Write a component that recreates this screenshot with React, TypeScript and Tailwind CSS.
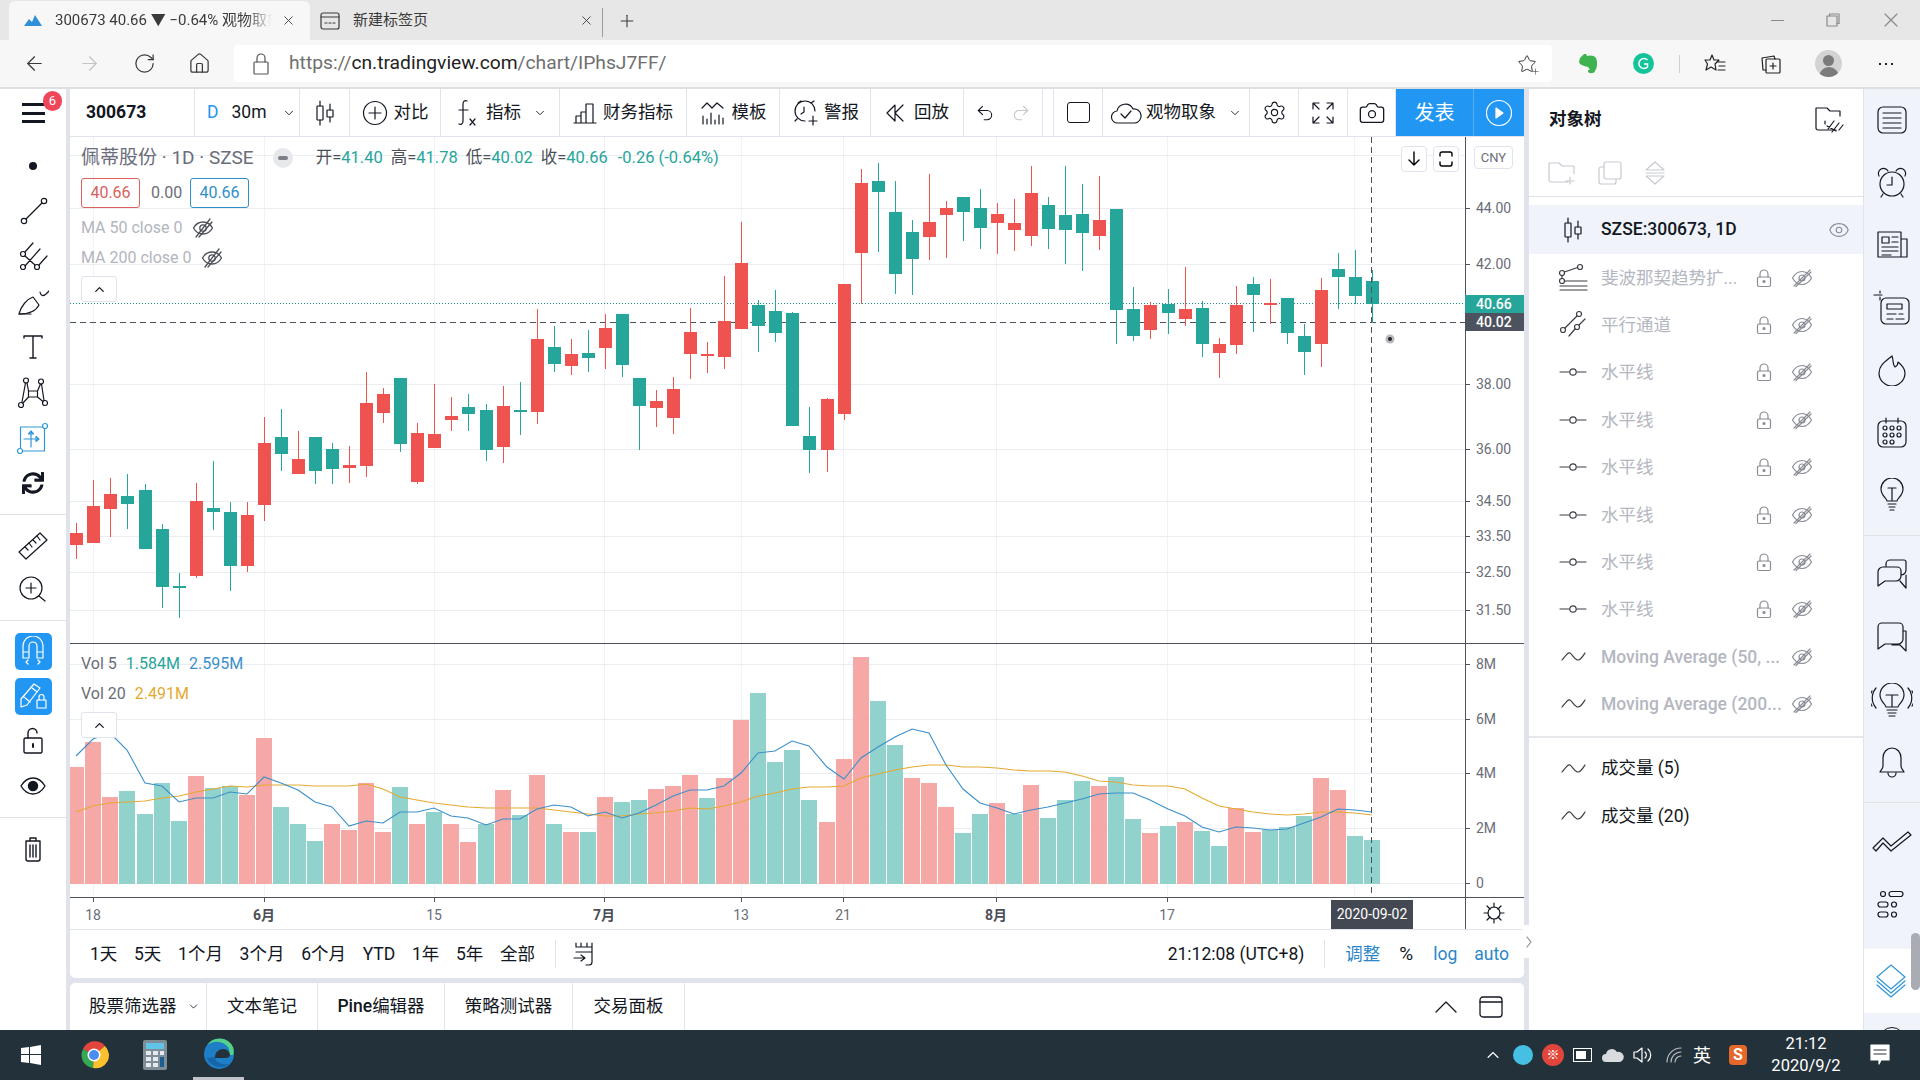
import { ChevronDown, ChevronUp, Camera, Settings, Undo2, Redo2, Star, Eye, X, Plus, ArrowLeft, ArrowRight, RotateCw, House } from 'lucide-react'
import { FaSync } from 'react-icons/fa'
import { ReactNode } from 'react'

// [wickTop, bodyTop, bodyBottom, wickBottom, color]
const candles: [number, number, number, number, string][] = [
  [523, 533, 545, 559, 'r'], [480, 506, 543, 543, 'r'], [478, 494, 509, 537, 'r'], [474, 496, 504, 529, 'g'],
  [484, 490, 549, 549, 'g'], [524, 529, 587, 608, 'g'], [573, 586, 588, 618, 'g'], [483, 501, 576, 578, 'r'],
  [461, 508, 512, 530, 'g'], [502, 512, 566, 591, 'g'], [502, 515, 566, 572, 'r'], [417, 443, 505, 521, 'r'],
  [409, 437, 454, 471, 'g'], [431, 459, 474, 474, 'r'], [437, 437, 471, 484, 'g'], [443, 449, 469, 484, 'g'],
  [446, 465, 468, 483, 'r'], [372, 403, 466, 477, 'r'], [388, 394, 413, 423, 'r'], [378, 378, 444, 452, 'g'],
  [423, 433, 482, 484, 'r'], [384, 434, 448, 448, 'r'], [397, 416, 420, 431, 'r'], [394, 407, 414, 431, 'g'],
  [404, 410, 450, 461, 'g'], [386, 406, 447, 463, 'r'], [382, 410, 412, 435, 'g'], [309, 339, 412, 424, 'r'],
  [326, 347, 364, 372, 'g'], [339, 354, 366, 375, 'r'], [330, 353, 358, 372, 'g'], [314, 328, 348, 369, 'r'],
  [314, 314, 365, 377, 'g'], [378, 378, 406, 450, 'g'], [390, 401, 408, 427, 'r'], [377, 389, 418, 434, 'r'],
  [308, 332, 354, 379, 'r'], [342, 354, 356, 373, 'r'], [276, 321, 357, 369, 'r'], [222, 263, 329, 329, 'r'],
  [300, 305, 326, 352, 'g'], [290, 311, 333, 342, 'g'], [312, 313, 426, 426, 'g'], [407, 436, 450, 473, 'g'],
  [398, 399, 450, 472, 'r'], [284, 284, 414, 420, 'r'], [169, 183, 253, 304, 'r'], [163, 181, 192, 252, 'g'],
  [181, 212, 274, 294, 'g'], [220, 232, 259, 295, 'g'], [174, 222, 237, 260, 'r'], [201, 208, 215, 258, 'r'],
  [197, 197, 212, 241, 'g'], [189, 208, 228, 249, 'g'], [203, 214, 223, 254, 'r'], [199, 223, 230, 251, 'r'],
  [166, 193, 236, 246, 'r'], [197, 205, 229, 249, 'g'], [166, 215, 230, 264, 'g'], [184, 214, 233, 271, 'g'],
  [176, 220, 236, 250, 'r'], [209, 209, 310, 344, 'g'], [287, 309, 336, 341, 'g'], [302, 305, 330, 339, 'r'],
  [289, 304, 313, 334, 'g'], [267, 309, 319, 326, 'r'], [301, 308, 344, 357, 'g'], [338, 344, 353, 378, 'r'],
  [286, 305, 345, 354, 'r'], [277, 284, 295, 332, 'g'], [279, 303, 305, 324, 'r'], [298, 298, 333, 344, 'g'],
  [324, 336, 352, 375, 'g'], [278, 290, 344, 367, 'r'], [253, 269, 277, 309, 'g'], [250, 277, 296, 304, 'g'],
  [270, 281, 304, 323, 'g'],
]

const volTops = [
  767, 742, 797, 791, 814, 783, 821, 776, 788, 786, 795, 738, 807, 824, 841, 824, 830, 783, 832, 787, 824, 812, 824, 842, 824, 790,
  815, 775, 824, 832, 832, 797, 802, 800, 789, 786, 775, 798, 778, 720, 693, 762, 750, 800, 822, 759, 657, 701, 745, 778, 783, 807,
  833, 814, 803, 814, 785, 818, 800, 781, 786, 777, 819, 833, 826, 822, 831, 846, 808, 832, 830, 827, 816, 778, 790, 836, 840,
]
const volColors = 'rrrggggrggrrgggrrrrgrgrrgrgrgrgrggrrrgrrggggrrrggrrrggrgrgggrggrgrggrrgggrrgg'

const ma5 = [
  756, 739, 733, 750, 783, 786, 802, 798, 798, 792, 794, 777, 783, 790, 802, 807, 826, 821, 823, 812, 812, 808, 816, 818, 825, 819,
  819, 809, 805, 807, 816, 812, 818, 813, 805, 796, 790, 790, 786, 773, 753, 751, 741, 746, 767, 779, 758, 747, 737, 729, 733, 765,
  789, 803, 808, 814, 810, 807, 803, 799, 794, 793, 793, 800, 809, 816, 827, 832, 827, 828, 830, 829, 823, 817, 809, 810, 812,
]
const ma20 = [
  812, 806, 803, 802, 801, 798, 796, 792, 789, 786, 787, 785, 785, 785, 786, 786, 786, 784, 789, 797, 800, 803, 805, 807, 808, 808,
  808, 808, 810, 812, 814, 816, 816, 814, 813, 811, 808, 809, 806, 802, 796, 793, 789, 787, 787, 786, 778, 774, 770, 767, 765, 765,
  767, 767, 768, 770, 771, 771, 772, 776, 781, 782, 785, 786, 786, 789, 798, 806, 809, 812, 814, 815, 814, 812, 812, 813, 815,
]

const barX = (i: number) => Math.round(76.3 + 17.05 * i)
const pts = (ys: number[]) => ys.map((y, i) => `${barX(i)},${y}`).join(' ')

const priceLabels: [string, number][] = [['44.00', 208], ['42.00', 264], ['38.00', 384], ['36.00', 449], ['34.50', 501], ['33.50', 536], ['32.50', 572], ['31.50', 610]]
const volLabels: [string, number][] = [['8M', 664], ['6M', 719], ['4M', 773], ['2M', 828], ['0', 883]]
const timeLabels: [string, number, boolean][] = [['18', 93, false], ['6月', 264, true], ['15', 434, false], ['7月', 604, true], ['13', 741, false], ['21', 843, false], ['8月', 996, true], ['17', 1167, false]]

const S = ({ w = 28, h = 28, sw = 1.2, className = '', children }: { w?: number; h?: number; sw?: number; className?: string; children: ReactNode }) => (
  <svg width={w} height={h} viewBox={`0 0 ${w} ${h}`} fill="none" stroke="currentColor" strokeWidth={sw} strokeLinecap="round" strokeLinejoin="round" className={`shrink-0 ${className}`}>
    {children}
  </svg>
)

const CandleIcon = () => (
  <S w={22} h={26}>
    <path d="M6 1v5M6 20v5M16 4v6M16 17v5" />
    <rect x="3" y="6" width="6" height="14" rx="0.5" />
    <rect x="13" y="10" width="6" height="7" rx="0.5" />
  </S>
)
const HLineIcon = () => (
  <S w={28} h={14}>
    <path d="M1 7h9M18 7h9" /><circle cx="14" cy="7" r="3.2" />
  </S>
)
const WaveIcon = () => (
  <S w={28} h={14}>
    <path d="M3 10C7 5 9 2 11 3s5 7 8 7 5-4 7-7" />
  </S>
)
const FibIcon = () => (
  <S w={32} h={32}>
    <circle cx="5" cy="11" r="2.5" /><circle cx="5" cy="19" r="2.5" /><circle cx="23" cy="5" r="2.5" />
    <path d="M7.5 10l13-4.5M5 13.5v3M8 19h22M3 24h27M3 28h27" />
  </S>
)
const ChannelIcon = () => (
  <S w={30} h={30}>
    <circle cx="5" cy="20" r="2.5" /><circle cx="19" cy="17" r="2.5" /><circle cx="21" cy="4" r="2.5" />
    <path d="M7 18L19 6M11 26l6-7M21 15l6-6" />
  </S>
)
const EyeOffGray = () => (
  <S w={22} h={20} className="text-[#8a8d96]">
    <path d="M1.5 10C4 5.5 7.5 3.5 11 3.5s7 2 9.5 6.5c-2.5 4.5-6 6.5-9.5 6.5S4 14.5 1.5 10z" />
    <circle cx="11" cy="10" r="3" /><path d="M3 18L19 2M5 18.5L20 4" />
  </S>
)
const LockGray = () => (
  <S w={16} h={20} className="text-[#8a8d96]">
    <path d="M4 9V6a4 4 0 018 0v3" /><rect x="1.5" y="9" width="13" height="9.5" rx="1.5" />
    <circle cx="8" cy="13.5" r="1" fill="currentColor" />
  </S>
)

const tree: { name: string; icon: ReactNode; lock: boolean; bold?: boolean }[] = [
  { name: '斐波那契趋势扩...', icon: <FibIcon />, lock: true },
  { name: '平行通道', icon: <ChannelIcon />, lock: true },
  { name: '水平线', icon: <HLineIcon />, lock: true },
  { name: '水平线', icon: <HLineIcon />, lock: true },
  { name: '水平线', icon: <HLineIcon />, lock: true },
  { name: '水平线', icon: <HLineIcon />, lock: true },
  { name: '水平线', icon: <HLineIcon />, lock: true },
  { name: '水平线', icon: <HLineIcon />, lock: true },
  { name: 'Moving Average (50, ...', icon: <WaveIcon />, lock: false, bold: true },
  { name: 'Moving Average (200...', icon: <WaveIcon />, lock: false, bold: true },
]

const TreeRow = ({ name, icon, lock, bold }: { name: string; icon: ReactNode; lock: boolean; bold?: boolean }) => (
  <div className="flex h-[47.4px] items-center">
    <div className="flex w-[72px] justify-end pr-[12px]"><div className="flex w-[32px] justify-center">{icon}</div></div>
    <div className={`w-[150px] text-[17.5px] whitespace-nowrap text-[#b4b7bf] ${bold ? 'font-medium' : ''}`}>{name}</div>
    <div className="ml-[13px] flex w-[0px] justify-center">{lock && <LockGray />}</div>
    <div className="ml-[26px] flex w-[24px] justify-center"><EyeOffGray /></div>
  </div>
)

const rightIcons: ReactNode[] = [
  <S w={32} h={30}><rect x="2" y="2" width="28" height="26" rx="5" /><path d="M7 8h18M7 13h18M7 18h18M7 23h18" /></S>,
  <S w={32} h={32}><circle cx="16" cy="17" r="12" /><path d="M16 10v8h-5M3 9a5 5 0 019-5M29 9a5 5 0 00-9-5M7 27l-2 3M25 27l2 3" /></S>,
  <S w={34} h={30}><path d="M26 27H3V2h23v25M26 9h6v18h-6" /><rect x="7" y="7" width="7" height="6" /><path d="M17 7h6M17 12h6M7 17h16M7 21h16M7 25h9" /></S>,
  <S w={38} h={36}><path d="M1 5h8M7 1v2M7 7v3" /><rect x="8" y="8" width="28" height="26" rx="5" /><path d="M14 14h15v5H14zM14 24h9M26 24h4M14 29h6M23 29h8" /></S>,
  <S w={30} h={32}><path d="M15 2c2 5 0 8 3 11 2-1 3-3 3-5 5 4 7 8 7 11a13 13 0 01-26 0C2 11 9 7 15 2z" /></S>,
  <S w={32} h={32}><rect x="2" y="4" width="28" height="26" rx="5" /><path d="M10 1v5M22 1v5" /><circle cx="9" cy="11" r="2" /><circle cx="16" cy="11" r="2" /><circle cx="23" cy="11" r="2" /><circle cx="9" cy="18" r="2" /><circle cx="16" cy="18" r="2" /><circle cx="23" cy="18" r="2" /><circle cx="9" cy="25" r="2" /><circle cx="16" cy="25" r="2" /></S>,
  <S w={26} h={34}><path d="M8 23c0-3-6-5-6-12a11 11 0 0122 0c0 7-6 9-6 12zM9 26h8M10 29h6M11 32h4M9 10h8M13 10v12" /></S>,
]
const rightIcons2: ReactNode[] = [
  <S w={32} h={34}><path d="M2 28V14a5 5 0 015-5h14a4 4 0 014 4v5a5 5 0 01-5 5H9l-7 5zM10 8V6a4 4 0 014-4h14a2 2 0 012 2v8a5 5 0 01-5 5M24 23l6 7V17" /></S>,
  <S w={32} h={32}><path d="M2 28V6a4 4 0 014-4h17a4 4 0 014 4v12a5 5 0 01-5 5H9l-7 5zM27 10h3v20l-6-6-8 0" /></S>,
  <S w={42} h={34}><path d="M15 24c0-3-6-5-6-12a12 12 0 0124 0c0 7-6 9-6 12zM16 27h10M17 30h8M18 33h6M15 12h12M21 12v12M5 5c-5 6-5 14 0 20M1 8c-3 5-3 10 0 15M37 5c5 6 5 14 0 20M41 8c3 5 3 10 0 15" /></S>,
  <S w={28} h={32}><path d="M14 2c5 0 9 4 9 10v8c0 3 2 4 3 6H2c1-2 3-3 3-6v-8c0-6 4-10 9-10zM10 27a4 4 0 008 0" /></S>,
]

const Divider = () => <div className="h-[1px] w-full shrink-0 bg-[#dfe3e8]" />

const ToolRow = ({ children }: { children: ReactNode }) => <div className="flex h-[45.4px] w-full items-center justify-center">{children}</div>

const LeftToolbar = () => (
  <aside className="flex w-[66px] shrink-0 flex-col bg-white text-[#131722]">
    <div className="relative flex h-[48px] items-center justify-center">
      <div className="flex w-[23px] flex-col gap-[5.5px]">
        <div className="h-[3px] bg-[#131722]" /><div className="h-[3px] bg-[#131722]" /><div className="h-[3px] bg-[#131722]" />
      </div>
      <div className="absolute top-[2px] left-[43px] flex h-[20px] w-[19px] items-center justify-center rounded-full bg-[#f0465a] text-[13px] text-white">6</div>
    </div>
    <div className="flex flex-col pt-[6px]">
      <ToolRow><div className="h-[8px] w-[8px] rounded-full bg-[#131722]" /></ToolRow>
      <ToolRow><S w={30} h={30}><circle cx="6" cy="25" r="2.7" /><circle cx="26" cy="5" r="2.7" /><path d="M8 23L24 7" /></S></ToolRow>
      <ToolRow><S w={30} h={30}><circle cx="5" cy="13" r="2.5" /><circle cx="5" cy="26" r="2.5" /><circle cx="19" cy="26" r="2.5" /><path d="M7 11l8-9M7 25L22 8M21 24l8-9M7 15l10 9" /></S></ToolRow>
      <ToolRow><S w={32} h={28}><path d="M2 26C4 18 10 11 16 9l6 8c-3 6-9 9-20 9z" /><path d="M2 26h12M23 4c1 5 4 5 9-1" /></S></ToolRow>
      <ToolRow><S w={24} h={28} sw={1.4}><path d="M3 5V3h18v2M12 3v22M9 25h6" /></S></ToolRow>
      <ToolRow><S w={30} h={32}><circle cx="8" cy="3.5" r="2.5" /><circle cx="23" cy="4.5" r="2.5" /><circle cx="3" cy="28" r="2.5" /><circle cx="27" cy="26" r="2.5" /><path d="M4 25L7.5 6M26 23.5L23.5 7M10.5 14h9v6h-9zM5 26l5.5-6M25 24.5L19.5 20M10.5 14L9 6M19.5 14l3-7" /></S></ToolRow>
      <ToolRow><S w={32} h={32} className="text-[#2f97d6]"><rect x="3.5" y="5" width="24" height="24" /><circle cx="28" cy="4" r="2.5" fill="white" /><circle cx="3" cy="29" r="2.5" fill="white" /><path d="M14 9v16M7 17h15M14 9l-2.5 3h5zM22 17l-3-2.5v5z" /></S></ToolRow>
      <ToolRow><FaSync size={22} className="text-[#131722]" /></ToolRow>
    </div>
    <div className="mt-[8px]"><Divider /></div>
    <div className="flex flex-col pt-[7px]">
      <ToolRow><S w={32} h={32}><path d="M2 23L23 4l7 7L9 30z" /><path d="M8 18l3 3M12 14l3 4M16 11l3 3M20 7l3 4" /></S></ToolRow>
      <ToolRow><S w={30} h={30}><circle cx="13" cy="13" r="11" /><path d="M13 8v10M8 13h10M21 21l6 5" /></S></ToolRow>
    </div>
    <div className="mt-[7px]"><Divider /></div>
    <div className="flex flex-col items-center gap-[8px] pt-[12px]">
      <div className="flex h-[37px] w-[37px] items-center justify-center rounded-[5px] bg-[#2196f3] text-white">
        <S w={24} h={30}><path d="M2 22V10a10 10 0 0120 0v12h-6V10a4 4 0 00-8 0v12zM2 16h6M16 16h6M7 24l-2 2 2 2M17 24l2 2-2 2" /></S>
      </div>
      <div className="flex h-[37px] w-[37px] items-center justify-center rounded-[5px] bg-[#2196f3] text-white">
        <S w={30} h={30}><path d="M3 18L16 3l6 4L9 24l-6 2zM6 16l6 5M13 6l6 5" /><rect x="19" y="19" width="9" height="8" /><path d="M21 19v-3a2.5 2.5 0 015 0v3" /></S>
      </div>
    </div>
    <div className="flex flex-col pt-[3px]">
      <ToolRow><S w={22} h={28} sw={1.4}><rect x="2" y="11" width="18" height="15" rx="1.5" /><path d="M6 11V6a4.5 4.5 0 019 0" /><path d="M11 17v3" strokeWidth="2" /></S></ToolRow>
      <ToolRow><S w={28} h={22} sw={1.4}><path d="M2 11c3-5 7-8 12-8s9 3 12 8c-3 5-7 8-12 8S5 16 2 11z" /><circle cx="14" cy="11" r="4.5" fill="currentColor" /></S></ToolRow>
    </div>
    <div className="mt-[8px]"><Divider /></div>
    <div className="flex justify-center pt-[18px]">
      <S w={20} h={26} sw={1.4}><path d="M3 5h14M7 5V2h6v3M3 5v18a2 2 0 002 2h10a2 2 0 002-2V5M7 9v12M10 9v12M13 9v12" /></S>
    </div>
  </aside>
)

const Cell = ({ className, children }: { className: string; children: ReactNode }) => (
  <div className={`flex h-full shrink-0 items-center justify-center border-r border-[#e0e3eb] ${className}`}>{children}</div>
)

const TopToolbar = () => (
  <div className="flex h-[48px] shrink-0 border-b border-[#e0e3eb] bg-white text-[17.5px] text-[#131722]">
    <Cell className="w-[125px] justify-start pl-[16px] font-bold">300673</Cell>
    <Cell className="w-[105px] justify-start pl-[12px]"><span className="text-[#2196f3]">D</span><span className="ml-[13px]">30m</span><ChevronDown size={14} strokeWidth={1.5} className="ml-[15px]" /></Cell>
    <Cell className="w-[50px]"><CandleIcon /></Cell>
    <Cell className="w-[91px] gap-[6px]"><S w={26} h={26}><circle cx="13" cy="13" r="11.5" /><path d="M13 7v12M7 13h12" /></S><span>对比</span></Cell>
    <Cell className="w-[119px] justify-start pl-[15px]">
      <S w={24} h={28}><path d="M11 2c-2-1-4 0-4 3v17c0 3-2 4-4 3M3 11h9M14 20l5 6M19 20l-5 6" /></S>
      <span className="ml-[6px]">指标</span><ChevronDown size={14} strokeWidth={1.5} className="ml-[12px]" />
    </Cell>
    <Cell className="w-[127px] gap-[6px]"><S w={24} h={22}><path d="M1 21h22M3 21v-7h5v7M8 21V10h5v11M13 21V2h7v19" /></S><span>财务指标</span></Cell>
    <Cell className="w-[93px] gap-[6px]"><S w={26} h={24}><path d="M2 7l5-5 5 5 5-5 6 5M3 23v-8M7 23v-5M11 23V12M15 23v-4M19 23v-9M23 23v-6" /></S><span>模板</span></Cell>
    <Cell className="w-[91px] gap-[5px]"><S w={28} h={28}><path d="M14 22a10 10 0 1 1 10-10M7 4l3-2M20 4l3-2M4 22l2-2M13 8v5l-3 2M22 17v9M18 22h8" /></S><span>警报</span></Cell>
    <Cell className="w-[93px] gap-[9px]"><S w={20} h={22}><path d="M10 3l-8 8 8 8zM18 3l-8 8 8 8" /></S><span>回放</span></Cell>
    <Cell className="w-[79px] gap-[16px]"><Undo2 size={20} strokeWidth={1.3} /><Redo2 size={20} strokeWidth={1.3} className="text-[#c4c6cc]" /></Cell>
    <Cell className="w-[11px]"><span /></Cell>
    <Cell className="w-[49px]"><div className="h-[21px] w-[23px] rounded-[3px] border-[1.5px] border-[#131722]" /></Cell>
    <Cell className="w-[147px] gap-[4px]">
      <S w={32} h={24}><path d="M8 22a6 6 0 01-1-12 8.5 8.5 0 0116-2 7 7 0 012 14z" /><path d="M11 13l4 4 6-7" /></S>
      <span>观物取象</span><ChevronDown size={14} strokeWidth={1.5} className="ml-[8px]" />
    </Cell>
    <Cell className="w-[49px]"><Settings size={25} strokeWidth={1.1} /></Cell>
    <Cell className="w-[49px]"><S w={24} h={24}><path d="M2 8V2h6M16 2h6v6M2 16v6h6M22 16v6h-6M3 3l5 5M21 3l-5 5M3 21l5-5M21 21l-5-5" /></S></Cell>
    <Cell className="w-[48px]"><Camera size={28} strokeWidth={1.1} /></Cell>
    <div className="flex h-full w-[78px] items-center justify-center border-r border-[#55adf5] bg-[#2196f3] text-[20px] text-white">发表</div>
    <div className="flex h-full w-[50px] items-center justify-center bg-[#2196f3] text-white">
      <S w={28} h={28}><circle cx="14" cy="14" r="12.5" /><path d="M11 9l7 5-7 5z" fill="currentColor" /></S>
    </div>
  </div>
)

const EyeOffLegend = () => (
  <S w={22} h={20} sw={1.3}>
    <path d="M1.5 10C4 5.5 7.5 4 11 4s7 1.5 9.5 6c-2.5 4.5-6 6-9.5 6S4 14.5 1.5 10z" />
    <circle cx="11" cy="10" r="3.2" /><path d="M4 19L18 1M7 19L20 4" />
  </S>
)

const Collapse = ({ className }: { className: string }) => (
  <div className={`flex h-[26px] w-[36px] items-center justify-center rounded-[3px] border border-[#e0e3eb] bg-white ${className}`}>
    <ChevronUp size={15} strokeWidth={2} className="text-[#131722]" />
  </div>
)

const Chart = () => (
  <div className="relative h-[792px] shrink-0 overflow-hidden bg-white">
    <svg width={1454} height={792} viewBox="70 137 1454 792" className="block">
      {[93, 264, 434, 604, 741, 843, 996, 1167, 1354].map(x => (
        <line key={x} x1={x + 0.5} x2={x + 0.5} y1={137} y2={897} stroke="#f0f3f6" />
      ))}
      {[155, 208, 264, 384, 449, 501, 536, 572, 610].map(y => <line key={y} x1={70} x2={1465} y1={y + 0.5} y2={y + 0.5} stroke="#ebeef1" />)}
      {[664, 719, 773, 828, 883].map(y => <line key={y} x1={70} x2={1465} y1={y + 0.5} y2={y + 0.5} stroke="#ebeef1" />)}

      <line x1={70} x2={1465} y1={303.5} y2={303.5} stroke="#1f8f85" strokeDasharray="1 2" />
      <line x1={70} x2={1465} y1={322.5} y2={322.5} stroke="#4c525e" strokeDasharray="6 4" />

      {candles.map(([wt, bt, bb, wb, c], i) => {
        const color = c === 'r' ? '#ef5350' : '#26a69a'
        const x = barX(i)
        return (
          <g key={i}>
            <line x1={x + 0.5} x2={x + 0.5} y1={wt} y2={wb} stroke={color} />
            <rect x={x - 6} y={bt} width={13} height={bb - bt} fill={color} />
          </g>
        )
      })}

      {volTops.map((t, i) => (
        <rect key={i} x={barX(i) - 8} y={t} width={16} height={884 - t} fill={volColors[i] === 'r' ? '#f6a8a6' : '#92d2cc'} />
      ))}
      <polyline points={pts(ma20)} fill="none" stroke="#e4a930" strokeWidth={1.1} />
      <polyline points={pts(ma5)} fill="none" stroke="#3b8fcb" strokeWidth={1.1} />

      <line x1={70} x2={1524} y1={643.5} y2={643.5} stroke="#50535e" />
      <line x1={70} x2={1524} y1={897.5} y2={897.5} stroke="#50535e" />
      <line x1={1465.5} x2={1465.5} y1={137} y2={929} stroke="#50535e" />
      <line x1={1371.5} x2={1371.5} y1={137} y2={897} stroke="#4c525e" strokeDasharray="6 4" />

      {priceLabels.map(([t, y]) => <g key={t}><line x1={1465} x2={1470} y1={y + 0.5} y2={y + 0.5} stroke="#50535e" /><text x={1476} y={y + 5} fontSize={14} fill="#6a6d78">{t}</text></g>)}
      {volLabels.map(([t, y]) => <g key={t}><line x1={1465} x2={1470} y1={y + 0.5} y2={y + 0.5} stroke="#50535e" /><text x={1476} y={y + 5} fontSize={14} fill="#6a6d78">{t}</text></g>)}
      {timeLabels.map(([t, x, b]) => <g key={t}><line x1={x + 0.5} x2={x + 0.5} y1={897} y2={902} stroke="#50535e" /><text x={x} y={920} fontSize={14} textAnchor="middle" fontWeight={b ? 700 : 400} fill={b ? '#4c4f58' : '#6a6d78'}>{t}</text></g>)}

      <circle cx={1390} cy={339} r={4.5} fill="#b6b8bd" /><circle cx={1390} cy={339} r={2} fill="#222" />
    </svg>

    <div className="absolute top-[158px] right-[0px] flex h-[18px] w-[59px] items-center bg-[#26a69a] pl-[11px] text-[14px] font-medium text-white">40.66</div>
    <div className="absolute top-[176px] right-[0px] flex h-[18px] w-[59px] items-center bg-[#4c525e] pl-[11px] text-[14px] font-medium text-white">40.02</div>
    <div className="absolute top-[763px] left-[1261px] flex h-[29px] w-[82px] items-center justify-center bg-[#434852] text-[14px] text-white">2020-09-02</div>
    <div className="absolute top-[764px] left-[1412px] text-[#131722]"><S w={24} h={24}><circle cx="12" cy="12" r="6" /><path d="M12 2v4M12 18v4M2 12h4M18 12h4M5 5l3 3M16 16l3 3M5 19l3-3M16 8l3-3" /></S></div>

    <div className="absolute top-[9px] left-[1331px] flex gap-[6px]">
      <div className="flex h-[26px] w-[26px] items-center justify-center rounded-[4px] border border-[#e0e3eb] bg-white"><S w={14} h={16} sw={1.4}><path d="M7 1v13M2 9l5 5 5-5" /></S></div>
      <div className="flex h-[26px] w-[26px] items-center justify-center rounded-[4px] border border-[#e0e3eb] bg-white"><S w={16} h={16} sw={1.4}><path d="M2 5V3a2 2 0 012-2h8a2 2 0 012 2v2M2 11v2a2 2 0 002 2h8a2 2 0 002-2v-2" /></S></div>
    </div>
    <div className="absolute top-[9px] left-[1404px] flex h-[23px] w-[39px] items-center justify-center rounded-[4px] border border-[#e0e3eb] bg-white text-[13px] text-[#6a6d78]">CNY</div>

    <div className="absolute top-[9px] left-[11px] flex flex-col items-start">
      <div className="flex h-[24px] items-center">
        <span className="text-[19px] text-[#6a6d78]">佩蒂股份 · 1D · SZSE</span>
        <div className="ml-[19px] flex h-[20px] w-[20px] items-center justify-center rounded-full bg-[#e6e8ec]"><div className="h-[4px] w-[10px] rounded-full bg-[#7c7f88]" /></div>
        <span className="ml-[23px] flex gap-[8px] text-[16.5px] text-[#4c4f58]">
          <span>开=<span className="text-[#26a69a]">41.40</span></span>
          <span>高=<span className="text-[#26a69a]">41.78</span></span>
          <span>低=<span className="text-[#26a69a]">40.02</span></span>
          <span>收=<span className="text-[#26a69a]">40.66</span></span>
          <span className="ml-[2px] text-[#26a69a]">-0.26 (-0.64%)</span>
        </span>
      </div>
      <div className="mt-[8px] flex h-[30px] items-center text-[16px]">
        <div className="flex h-[30px] w-[59px] items-center justify-center rounded-[3px] border border-[#d9605c] text-[#d9605c]">40.66</div>
        <span className="ml-[11px] w-[39px] text-[#6a6d78]">0.00</span>
        <div className="flex h-[30px] w-[59px] items-center justify-center rounded-[3px] border border-[#2f8fc9] text-[#2f8fc9]">40.66</div>
      </div>
      <div className="mt-[5px] flex h-[30px] items-center gap-[9px] text-[16px] text-[#b2b5be]">
        <span>MA 50 close 0</span>
        <span className="text-[#4c4f58]"><EyeOffLegend /></span>
      </div>
      <div className="flex h-[30px] items-center gap-[9px] text-[16px] text-[#b2b5be]">
        <span>MA 200 close 0</span>
        <span className="text-[#4c4f58]"><EyeOffLegend /></span>
      </div>
      <Collapse className="mt-[3px]" />
    </div>

    <div className="absolute top-[512px] left-[11px] flex flex-col items-start text-[16px]">
      <div className="flex h-[30px] items-center gap-[9px] text-[#6a6d78]">
        <span>Vol 5</span><span className="text-[#26a69a]">1.584M</span><span className="text-[#3b8fcb]">2.595M</span>
      </div>
      <div className="flex h-[30px] items-center gap-[9px] text-[#6a6d78]">
        <span>Vol 20</span><span className="text-[#e4a930]">2.491M</span>
      </div>
      <Collapse className="mt-[3px]" />
    </div>
  </div>
)

const RangeBar = () => (
  <div className="flex h-[49px] shrink-0 items-center justify-between rounded-b-[5px] border-t border-[#e0e3eb] bg-white text-[17.5px] text-[#131722]">
    <div className="flex items-center pl-[20px]">
      <div className="flex items-center gap-[16.7px]">
        {['1天', '5天', '1个月', '3个月', '6个月', 'YTD', '1年', '5年', '全部'].map(t => <span key={t}>{t}</span>)}
      </div>
      <div className="ml-[20px] mr-[15px] h-[28px] w-[1px] bg-[#e0e3eb]" />
      <S w={24} h={26}><path d="M5 6h16v15a3 3 0 01-3 3h-3M5 6V2M10 6V2M16 6V2M21 6V2M5 11h16M3 17h11M10 14l4 3-4 3" /></S>
    </div>
    <div className="flex items-center pr-[15px]">
      <span>21:12:08 (UTC+8)</span>
      <div className="mx-[20px] h-[28px] w-[1px] bg-[#e0e3eb]" />
      <span className="text-[#2a86c9]">调整</span>
      <span className="ml-[19px] text-[19px]">%</span>
      <span className="ml-[20px] text-[#2a86c9]">log</span>
      <span className="ml-[17px] text-[#2a86c9]">auto</span>
    </div>
  </div>
)

const BottomTabs = () => (
  <div className="mt-[5px] flex h-[47px] shrink-0 items-center justify-between rounded-t-[5px] bg-white text-[17.5px] text-[#131722]">
    <div className="flex h-full">
      <Cell className="w-[137px] justify-start pl-[19px]"><span>股票筛选器</span><ChevronDown size={13} strokeWidth={1.5} className="ml-[10px]" /></Cell>
      <Cell className="w-[111px]">文本笔记</Cell>
      <Cell className="w-[127px]"><span><span className="font-medium">Pine</span>编辑器</span></Cell>
      <Cell className="w-[128px]">策略测试器</Cell>
      <Cell className="w-[112px]">交易面板</Cell>
    </div>
    <div className="flex items-center gap-[21px] pr-[21px]">
      <S w={24} h={14} sw={1.3}><path d="M2 12L12 2l10 10" /></S>
      <S w={24} h={22} sw={1.3}><rect x="1" y="1" width="22" height="20" rx="3" /><path d="M1 6h22" /></S>
    </div>
  </div>
)

const ObjectTree = () => (
  <section className="flex w-[334px] shrink-0 flex-col bg-white">
    <div className="flex h-[108px] flex-col border-b border-[#e0e3eb]">
      <div className="flex h-[60px] items-center justify-between pt-[1px] pr-[19px] pl-[20px]">
        <span className="text-[17.5px] font-bold text-[#131722]">对象树</span>
        <S w={30} h={30} className="text-[#131722]"><path d="M22 25H4a2 2 0 01-2-2V3h11l3 3h10v5M11 16v3" /><path d="M14 24l6-8M18 27l7-9M25 25l4-5M13 21l9 5" /></S>
      </div>
      <div className="flex h-[47px] items-center gap-[22px] pl-[19px] text-[#c8cad1]">
        <S w={28} h={24}><path d="M20 21H3a2 2 0 01-2-2V2h10l3 3h12v8M22 16v7M18 20h8" /></S>
        <S w={24} h={24}><rect x="6" y="1" width="17" height="17" rx="2" /><path d="M6 6H3a2 2 0 00-2 2v13a2 2 0 002 2h13a2 2 0 002-2v-3" /></S>
        <S w={22} h={26}><path d="M2 10l9-8 9 8zM2 16l9 8 9-8zM2 13h18" /></S>
      </div>
    </div>
    <div className="mt-[8px] flex h-[49px] items-center bg-[#f0f3fa]">
      <div className="flex w-[72px] justify-end pr-[12px]"><div className="flex w-[32px] justify-center text-[#131722]"><CandleIcon /></div></div>
      <div className="w-[227px] text-[17.5px] font-medium text-[#131722]">SZSE:300673, 1D</div>
      <Eye size={22} strokeWidth={1.2} className="text-[#8a8d96]" />
    </div>
    <div className="text-[#3a3d45]">
      {tree.map((r, i) => <TreeRow key={i} {...r} />)}
    </div>
    <div className="mt-[8px] border-t-2 border-[#e6e8ec] pt-[7px] text-[#3a3d45]">
      {['成交量 (5)', '成交量 (20)'].map(t => (
        <div key={t} className="flex h-[47.4px] items-center">
          <div className="flex w-[72px] justify-end pr-[12px]"><div className="flex w-[32px] justify-center"><WaveIcon /></div></div>
          <div className="text-[17.5px] text-[#131722]">{t}</div>
        </div>
      ))}
    </div>
  </section>
)

const RightBar = () => (
  <aside className="relative flex w-[57px] shrink-0 flex-col overflow-hidden border-l border-[#e0e3eb] bg-[#f0f3fa] text-[#131722]">
    <div className="flex shrink-0 flex-col pb-[8px]">
      {rightIcons.map((ic, i) => <div key={i} className="flex h-[62.5px] items-center justify-center">{ic}</div>)}
    </div>
    <Divider />
    <div className="flex shrink-0 flex-col py-[8px]">
      {rightIcons2.map((ic, i) => <div key={i} className="flex h-[62.5px] items-center justify-center">{ic}</div>)}
    </div>
    <Divider />
    <div className="flex h-[78px] shrink-0 items-center justify-center"><S w={42} h={24}><path d="M2 18L12 8l8 8L37 2l3 3-20 16-8-8-7 8z" /></S></div>
    <div className="flex h-[68.5px] shrink-0 items-center justify-center pb-[17px]"><S w={32} h={32}><circle cx="7" cy="4" r="2.5" /><rect x="13" y="1.5" width="14" height="5" rx="2.5" /><rect x="2" y="12" width="10" height="5" rx="2.5" /><circle cx="18" cy="14.5" r="2.5" /><rect x="2" y="22" width="10" height="5" rx="2.5" /><circle cx="18" cy="24.5" r="2.5" /></S></div>
    <div className="flex h-[64px] shrink-0 items-center justify-center bg-white pr-[3px] text-[#2f97d6]"><S w={30} h={34}><path d="M15 1l14 12-14 12L1 13zM1 17l14 12 14-12M1 21l14 12 14-12" /></S></div>
    <div className="absolute top-[844px] right-[0px] h-[57px] w-[9px] rounded-full bg-[#a9adb3]" />
    <div className="mt-[14px] h-[26px] w-[26px] shrink-0 self-center rounded-full border border-[#131722]" />
  </aside>
)

const BrowserChrome = () => (
  <header className="shrink-0 text-[#3a3a3a]">
    <div className="flex h-[40px] items-end bg-[#e7e7e7] pl-[9px]">
      <div className="flex h-[39px] w-[301px] items-center rounded-t-[6px] bg-[#f7f7f7] pr-[14px] pl-[15px]">
        <svg width={18} height={14} viewBox="0 0 18 14" fill="#2f8fd8"><path d="M0 12l5-7 3 3 3-7 7 11z" /></svg>
        <span className="ml-[13px] w-[217px] overflow-hidden text-[15px] whitespace-nowrap [mask-image:linear-gradient(90deg,#000_88%,transparent)]">300673 40.66 ▼ −0.64% 观物取象</span>
        <X size={15} strokeWidth={1.4} className="ml-auto" />
      </div>
      <div className="flex h-[39px] w-[292px] items-center pr-[8px] pl-[10px]">
        <S w={20} h={20}><rect x="1" y="2" width="18" height="16" rx="2" /><path d="M1 6h18M5 12h2M9 12h2M13 12h2" /></S>
        <span className="ml-[13px] text-[15px]">新建标签页</span>
        <X size={15} strokeWidth={1.4} className="ml-auto" />
      </div>
      <div className="mb-[3px] h-[29px] w-[1px] bg-[#9a9a9a]" />
      <Plus size={20} strokeWidth={1.3} className="mb-[9px] ml-[14px]" />
      <div className="mb-[13px] ml-auto flex items-center text-[#8a8a8a]">
        <div className="mr-[42px] h-[1px] w-[13px] bg-[#8a8a8a]" />
        <S w={14} h={14} className="mr-[44px]"><rect x="1" y="3" width="10" height="10" /><path d="M3.5 3V1H13v9.5h-2" /></S>
        <S w={14} h={14} className="mr-[22px]"><path d="M1 1l12 12M13 1L1 13" /></S>
      </div>
    </div>
    <div className="flex h-[49px] items-center border-b-2 border-[#dedfe0] bg-[#f7f7f7]">
      <ArrowLeft size={23} strokeWidth={1.3} className="ml-[23px] shrink-0" />
      <ArrowRight size={23} strokeWidth={1.3} className="ml-[32px] shrink-0 text-[#c4c4c4]" />
      <RotateCw size={23} strokeWidth={1.3} className="ml-[32px] shrink-0" />
      <House size={23} strokeWidth={1.3} className="ml-[32px] shrink-0" />
      <div className="ml-[23px] flex h-[37px] w-[1318px] shrink-0 items-center rounded-[4px] bg-white pl-[19px]">
        <S w={16} h={22} className="text-[#555]"><rect x="1" y="9" width="14" height="12" rx="1" /><path d="M4 9V5a4 4 0 018 0v4" /></S>
        <span className="ml-[20px] text-[19.25px]"><span className="text-[#6f6f6f]">https://</span><span className="text-[#222]">cn.tradingview.com</span><span className="text-[#6f6f6f]">/chart/IPhsJ7FF/</span></span>
        <div className="relative mr-[15px] ml-auto flex"><Star size={20} strokeWidth={1.2} /><Plus size={9} strokeWidth={1.5} className="absolute right-[-3px] bottom-[-2px]" /></div>
      </div>
      <div className="flex items-center">
        <svg width={20} height={22} viewBox="0 0 20 22" fill="#3fb34f" className="ml-[26px]"><path d="M2 5L6 1h2l1 2c3-1 7-1 9 2 2 5 1 10-1 13-1 3-7 3-7 0 0-2 4-1 3 0l-3-4c-4-1-8-2-9-5z" /></svg>
        <div className="ml-[35px] flex h-[21px] w-[21px] items-center justify-center rounded-full bg-[#15c39a]"><svg width={13} height={13} viewBox="0 0 13 13" fill="none" stroke="white" strokeWidth={1.5}><path d="M10.5 3a5 5 0 100 7V7H7" /></svg></div>
        <div className="ml-[25px] h-[18px] w-[1px] bg-[#d0d0d0]" />
        <S w={22} h={20} className="ml-[24px] text-[#222]"><path d="M8 1l2 5h5l-4 4 1 6-5-3-5 3 1.5-6L1 6h5zM14 8h7M15 12h6M14 16h7" /></S>
        <S w={20} h={20} className="ml-[35px] text-[#222]"><rect x="5" y="5" width="14" height="14" rx="1" /><path d="M5 16H2L1 4l12-2 1 3M12 9v6M9 12h6" /></S>
        <div className="ml-[34px] flex h-[27px] w-[27px] items-end justify-center overflow-hidden rounded-full bg-[#d3d3d3]"><div className="flex flex-col items-center"><div className="h-[11px] w-[11px] rounded-full bg-[#7b7b7b]" /><div className="mt-[1px] h-[10px] w-[20px] rounded-t-full bg-[#7b7b7b]" /></div></div>
        <div className="ml-[37px] flex gap-[4px]"><div className="h-[2px] w-[2px] bg-[#222]" /><div className="h-[2px] w-[2px] bg-[#222]" /><div className="h-[2px] w-[2px] bg-[#222]" /></div>
      </div>
    </div>
  </header>
)

const Taskbar = () => (
  <footer className="flex h-[50px] shrink-0 items-center bg-[#23323a] text-white">
    <svg width={22} height={22} viewBox="0 0 22 22" fill="white" className="ml-[20px]"><path d="M1 4l8-1v7H1zM10 3l11-2v9H10zM1 11h8v8l-8-1zM10 11h11v10l-11-2z" /></svg>
    <svg width={30} height={30} viewBox="0 0 30 30" className="ml-[37px]">
      <path d="M15 15L4 9a13 13 0 0122-3z" fill="#e2453c" /><path d="M15 15L4 9a13 13 0 0010 19z" fill="#35a853" /><path d="M15 15l11-9a13 13 0 01-12 22z" fill="#fbc02d" />
      <circle cx="15" cy="15" r="6.5" fill="white" /><circle cx="15" cy="15" r="5" fill="#4a8cf0" />
    </svg>
    <svg width={24} height={30} viewBox="0 0 24 30" className="ml-[34px]"><rect width="24" height="30" rx="2" fill="#7f8d99" /><rect x="3" y="3" width="18" height="6" fill="#5ec5e8" /><g fill="#e6eaee"><rect x="3" y="11" width="5" height="4" /><rect x="10" y="11" width="5" height="4" /><rect x="17" y="11" width="4" height="4" /><rect x="3" y="17" width="5" height="4" /><rect x="10" y="17" width="5" height="4" /><rect x="3" y="23" width="5" height="4" /><rect x="10" y="23" width="5" height="4" /></g><rect x="17" y="17" width="4" height="10" fill="#1d5e92" /></svg>
    <div className="ml-[26px] flex h-full w-[51px] items-center justify-center border-b-[3px] border-[#c0c4c8]">
      <svg width={32} height={32} viewBox="0 0 32 32"><circle cx="16" cy="16" r="15" fill="#1e7fc6" /><path d="M30 9A15 15 0 0 0 4 7c5-4 14-5 20 1 3 3 3 7 1 9h5c1-3 1-6 0-8z" fill="#54d18a" /><path d="M12 19c0-5 4-8 8-8s7 3 7 6c0 2-2 3-5 3H12z" fill="#23323a" /><path d="M4 20c3 8 14 12 22 6-6 1-14-1-14-7z" fill="#1565a8" /></svg>
    </div>
    <div className="ml-auto flex items-center">
      <ChevronUp size={20} strokeWidth={1.3} className="mr-[10px]" />
      <div className="mr-[9px] h-[20px] w-[20px] rounded-full border-[3px] border-[#46c0e2] bg-[#46c0e2]" />
      <div className="mr-[8.5px] flex h-[22px] w-[22px] items-center justify-center rounded-full bg-[#e2453c] text-[13px]">※</div>
      <div className="mr-[10.5px] flex h-[14px] w-[19px] items-center border border-white pl-[2px]"><div className="h-[8px] w-[10px] bg-white" /></div>
      <svg width={22} height={14} viewBox="0 0 22 14" fill="#d8dcdf" className="mr-[8px]"><path d="M4 14a4 4 0 010-8 6 6 0 0111-2 5 5 0 013 10z" /></svg>
      <S w={20} h={20} className="mr-[13px]"><path d="M2 7v6h3l5 4V3L5 7zM13 7a4 4 0 010 6M16 4a8 8 0 010 12" /></S>
      <S w={18} h={18} className="mr-[10px] text-[#b9bec2]"><path d="M2 16A14 14 0 0116 2M6 16A10 10 0 0116 6M10 16a6 6 0 016-6" /></S>
      <span className="mr-[18px] text-[18px]">英</span>
      <div className="mr-[24px] flex h-[20px] w-[18px] items-center justify-center rounded-[4px] bg-[#e5682a] text-[16px] font-bold">S</div>
      <div className="mr-[29px] flex w-[70px] flex-col items-center text-[16.5px] leading-[22px]"><span>21:12</span><span>2020/9/2</span></div>
      <S w={20} h={22} className="mr-[30px]"><path d="M1 1h18v15H11l-2 4v-4H1z" fill="white" /><path d="M4 6h12M4 10h12" stroke="#23323a" /></S>
    </div>
  </footer>
)

export default function App() {
  return (
    <div className="flex h-[1080px] w-[1920px] flex-col overflow-hidden bg-[#e0e3eb] font-[Roboto,'Noto_Sans_CJK_SC',sans-serif]">
      <BrowserChrome />
      <main className="relative flex min-h-0 flex-1">
        <LeftToolbar />
        <div className="ml-[4px] flex w-[1454px] shrink-0 flex-col">
          <TopToolbar />
          <Chart />
          <RangeBar />
          <BottomTabs />
        </div>
        <div className="absolute top-[836px] left-[1522px] z-10 flex h-[33px] w-[13px] items-center justify-center rounded-[4px] bg-white text-[#8a8d96]">
          <S w={6} h={12}><path d="M1 1l4 5-4 5" /></S>
        </div>
        <div className="ml-[5px] flex min-w-0 flex-1">
          <ObjectTree />
          <RightBar />
        </div>
      </main>
      <Taskbar />
    </div>
  )
}
